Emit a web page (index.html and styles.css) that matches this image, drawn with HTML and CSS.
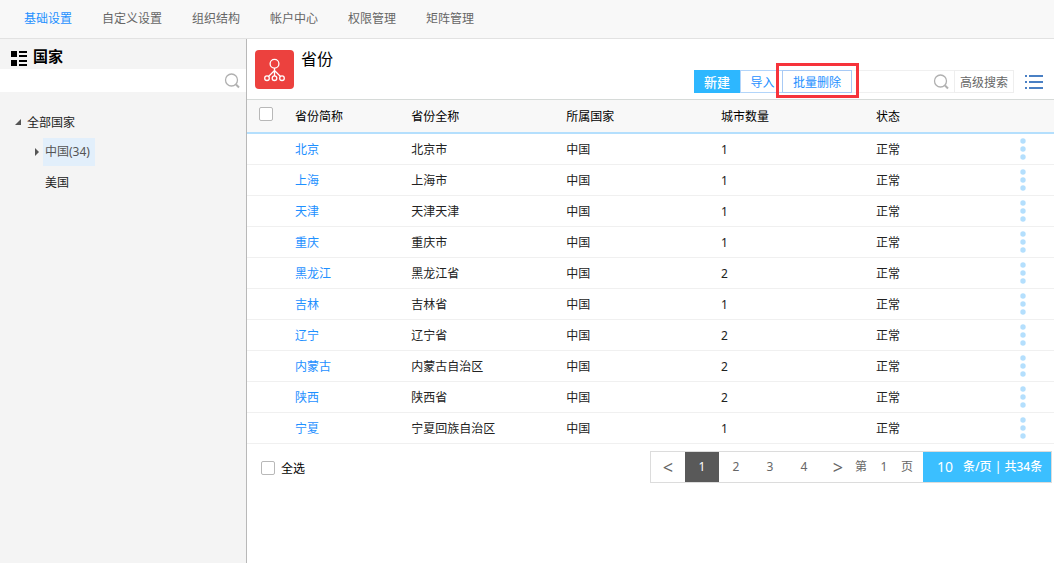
FILE: index.html
```html
<!DOCTYPE html>
<html lang="zh-CN">
<head>
<meta charset="utf-8">
<title>省份</title>
<link rel="stylesheet" href="styles.css">
</head>
<body>
<nav class="topnav">
  <a class="topnav-link active" href="#">基础设置</a>
  <a class="topnav-link" href="#">自定义设置</a>
  <a class="topnav-link" href="#">组织结构</a>
  <a class="topnav-link" href="#">帐户中心</a>
  <a class="topnav-link" href="#">权限管理</a>
  <a class="topnav-link" href="#">矩阵管理</a>
</nav>
<div class="layout">
  <aside class="sidebar">
    <div class="side-head">
      <svg class="side-icon" width="16" height="15" viewBox="0 0 16 15"><path d="M0 0h6v6H0zM8 0h8v2H8zM8 4h8v2H8zM0 9h6v6H0zM8 9h8v2H8zM8 13h8v2H8z"/></svg>
      <h2 class="side-title">国家</h2>
    </div>
    <div class="side-search">
      <input class="side-input" type="text" aria-label="搜索国家">
      <svg class="search-icon" width="16" height="16" viewBox="0 0 16 16"><circle cx="7.5" cy="7" r="6"/><path d="M12 11.5l3 3"/></svg>
    </div>
    <ul class="tree">
      <li class="tree-item root"><svg class="arrow" width="6" height="6" viewBox="0 0 6 6"><path d="M6 0v6H0z"/></svg><a class="tree-link" href="#">全部国家</a></li>
      <li class="tree-item child"><svg class="arrow" width="6" height="8" viewBox="0 0 6 8"><path d="M1 0l4 4-4 4z"/></svg><a class="tree-link selected" href="#">中国(34)</a></li>
      <li class="tree-item child leaf"><a class="tree-link" href="#">美国</a></li>
    </ul>
  </aside>
  <main class="content">
    <header class="page-head">
      <svg class="app-icon" width="39" height="39" viewBox="0 0 39 39"><rect width="39" height="39" rx="4"/><g fill="none" stroke="#fff" stroke-width="1.3"><circle cx="19.5" cy="13.7" r="4.4"/><circle cx="12" cy="28.2" r="2.3"/><circle cx="19.5" cy="28.2" r="2.3"/><circle cx="27" cy="28.2" r="2.3"/><path d="M19.5 18v8M19.5 20.5l-6 6M19.5 20.5l6 6"/></g></svg>
      <h1 class="page-title">省份</h1>
      <div class="toolbar">
        <button class="btn primary" type="button">新建</button>
        <button class="btn import" type="button">导入</button>
        <div class="marked"><button class="btn delete" type="button">批量删除</button></div>
        <div class="search">
          <input class="search-input" type="text" aria-label="搜索省份">
          <svg class="search-icon" width="16" height="16" viewBox="0 0 16 16"><circle cx="7.5" cy="7" r="6"/><path d="M12 11.5l3 3"/></svg>
        </div>
        <button class="btn advanced" type="button">高级搜索</button>
        <button class="menu" type="button" aria-label="菜单"><svg width="18" height="14" viewBox="0 0 18 14"><path d="M0 0h2v2H0zM4 0h14v2H4zM0 6h2v2H0zM4 6h14v2H4zM0 12h2v2H0zM4 12h14v2H4z"/></svg></button>
      </div>
    </header>
    <table class="grid">
      <colgroup><col class="c-check"><col class="c-short"><col class="c-mid"><col class="c-mid"><col class="c-mid"><col><col class="c-more"></colgroup>
      <thead><tr><th class="check-cell"><input class="check" type="checkbox" aria-label="选择全部行"></th><th>省份简称</th><th>省份全称</th><th>所属国家</th><th>城市数量</th><th>状态</th><th></th></tr></thead>
      <tbody id="rows"></tbody>
    </table>
    <footer class="foot">
      <label class="all"><input class="check" type="checkbox">全选</label>
      <div class="pager">
        <button class="page arrow-btn" type="button">&lt;</button>
        <button class="page current" type="button">1</button>
        <button class="page" type="button">2</button>
        <button class="page" type="button">3</button>
        <button class="page" type="button">4</button>
        <button class="page arrow-btn" type="button">&gt;</button>
        <label class="jump">第<input class="jump-input" type="text" value="1">页</label>
        <label class="size"><input class="size-input" type="text" value="10">条/页 | 共34条</label>
      </div>
    </footer>
  </main>
</div>
<script src="rows.js"></script>
</body>
</html>
```

FILE: styles.css
```css
* { box-sizing: border-box; }
body {
  margin: 0;
  min-height: 100vh;
  display: flex;
  flex-direction: column;
  font: 12px/18px "Noto Sans CJK SC", sans-serif;
  color: #222;
  background: #fff;
}
a { text-decoration: none; }
button, input { font: inherit; color: inherit; margin: 0; padding: 0; border: 0; background: none; outline: 0; border-radius: 0; }
h1, h2 { margin: 0; font-weight: 400; }

.topnav {
  display: flex;
  gap: 30px;
  padding: 9px 24px 11px;
  background: #f8f8f8;
  border-bottom: 1px solid #e2e2e2;
}
.topnav-link { color: #666; }
.topnav-link.active { color: #1e90ff; }

.layout { flex: 1; display: flex; }
.sidebar { flex: 0 0 247px; background: #f4f4f4; border-right: 1px solid #b8b8b8; }
.side-head { display: flex; gap: 6px; padding: 8px 11px 4px; height: 30px; }
.side-icon { margin-top: 4px; }
.side-title { font-size: 15px; line-height: 18px; font-weight: 700; color: #000; }
.side-search { display: flex; align-items: center; height: 23px; padding-right: 6px; background: #fff; }
.side-input { flex: 1; min-width: 0; height: 23px; }
.search-icon { flex: none; fill: none; stroke: #b0b0b0; stroke-width: 1.3; }
.search-icon path { stroke-width: 2; }

.tree { list-style: none; margin: 15px 0 0; padding: 0; }
.tree-item { display: flex; align-items: center; height: 30px; }
.root { padding-left: 15px; gap: 3px; }
.child { padding-left: 34px; gap: 3px; }
.leaf { padding-left: 43px; }
.arrow { fill: #555; }
.tree-link { color: #222; line-height: 28px; padding: 0 3px; }
.selected { background: #e2effb; color: #555; padding: 0 5px 0 2px; font-family: "Noto Sans", "Noto Sans CJK SC", sans-serif; }
.leaf .tree-link { padding-left: 2px; }

.content { flex: 1; min-width: 0; }
.page-head { display: flex; align-items: flex-start; height: 61px; padding: 11px 11px 0 8px; border-bottom: 1px solid #d6dad8; }
.app-icon { fill: #ec413e; }
.page-title { margin-left: 7px; font-size: 16px; line-height: 16px; color: #000; }
.toolbar { display: flex; align-items: center; margin: 20px 0 0 auto; height: 23px; }
.btn { height: 23px; line-height: 21px; white-space: nowrap; }
.primary { width: 46px; font-size: 13px; color: #fff; background: #2db7ff; font-weight: 500; }
.import { width: 42px; padding-left: 2px; border: 1px solid #b2d5fa; border-right: 0; color: #1e90ff; }
.marked { position: relative; display: flex; }
.marked::after { content: ""; position: absolute; inset: -7px -7px -5px -6px; border: 3px solid #f6333b; pointer-events: none; }
.delete { width: 70px; border: 1px solid #a8caf5; color: #1e90ff; }
.search { display: flex; align-items: center; width: 102px; height: 23px; padding-right: 5px; border: 1px solid #f0f0f0; border-width: 1px 0; }
.search-input { flex: 1; min-width: 0; }
.advanced { width: 60px; border: 1px solid #eee; color: #666; }
.menu { display: flex; margin-left: 11px; fill: #4a80c4; }

.grid { width: 100%; table-layout: fixed; border-collapse: separate; border-spacing: 0; }
.c-check { width: 48px; }
.c-short { width: 14.4%; }
.c-mid { width: 19.2%; }
.c-more { width: 64px; }
.grid th, .grid td { padding: 0; text-align: left; font-weight: 400; white-space: nowrap; }
.grid th { height: 34px; background: #f8f8f8; border-bottom: 2px solid #b4dffd; color: #000; }
.grid td { height: 31px; border-bottom: 1px solid #f0f0f0; }
.grid .low { padding-top: 2px; font-family: "Noto Sans", "Noto Sans CJK SC", sans-serif; }
.grid .check-cell { padding-left: 12px; vertical-align: top; padding-top: 7px; }
.check { appearance: none; display: block; flex: none; width: 14px; height: 14px; border: 1px solid #b8b8b8; border-radius: 2px; background: #fff; }
.row-link { color: #1e90ff; }
.more { display: flex; margin-left: 30px; fill: #b4dffd; }

.foot { display: flex; justify-content: space-between; padding: 7px 2px 0 14px; }
.all { display: flex; align-items: center; gap: 6px; height: 34px; color: #000; }
.pager { display: flex; height: 32px; border: 1px solid #dcdcdc; color: #666; font-family: "Noto Sans", "Noto Sans CJK SC", sans-serif; }
.page { width: 34px; }
.arrow-btn { font-size: 18px; }
.current { background: #595959; color: #fff; }
.jump, .size { display: flex; align-items: center; white-space: nowrap; }
.jump { width: 68px; }
.jump-input { width: 34px; text-align: center; }
.size { width: 128px; padding-left: 10px; background: #3bbfff; color: #fff; font-weight: 500; }
.size-input { width: 30px; padding-left: 4px; font-size: 14px; font-weight: 400; }
```

FILE: rows.js
```js
const provinces = [
  ["北京", "北京市", 1], ["上海", "上海市", 1], ["天津", "天津天津", 1],
  ["重庆", "重庆市", 1], ["黑龙江", "黑龙江省", 2], ["吉林", "吉林省", 1],
  ["辽宁", "辽宁省", 2], ["内蒙古", "内蒙古自治区", 2], ["陕西", "陕西省", 2],
  ["宁夏", "宁夏回族自治区", 1]
];
document.getElementById("rows").innerHTML = provinces.map(([short, full, count]) => `
  <tr><td></td><td class="low"><a class="row-link" href="#">${short}</a></td><td>${full}</td><td>中国</td><td class="low">${count}</td><td>正常</td>
  <td><button class="more" type="button" aria-label="更多"><svg width="6" height="22" viewBox="0 0 6 22"><circle cx="3" cy="3" r="2.7"/><circle cx="3" cy="11" r="2.7"/><circle cx="3" cy="19" r="2.7"/></svg></button></td></tr>`).join("");
```
